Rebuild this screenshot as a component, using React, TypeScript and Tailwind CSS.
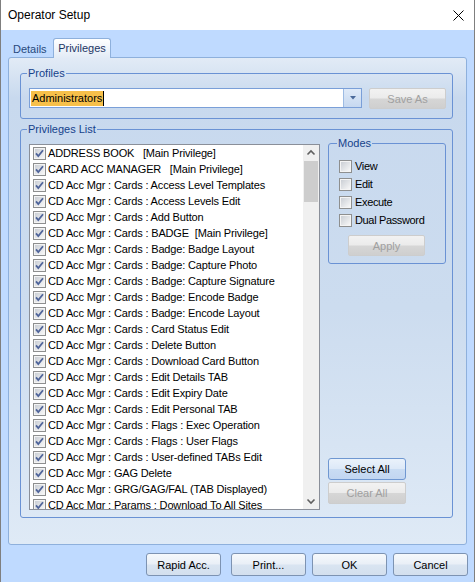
import React from 'react'

const rows = [
  'ADDRESS BOOK   [Main Privilege]',
  'CARD ACC MANAGER   [Main Privilege]',
  'CD Acc Mgr : Cards : Access Level Templates',
  'CD Acc Mgr : Cards : Access Levels Edit',
  'CD Acc Mgr : Cards : Add Button',
  'CD Acc Mgr : Cards : BADGE  [Main Privilege]',
  'CD Acc Mgr : Cards : Badge: Badge Layout',
  'CD Acc Mgr : Cards : Badge: Capture Photo',
  'CD Acc Mgr : Cards : Badge: Capture Signature',
  'CD Acc Mgr : Cards : Badge: Encode Badge',
  'CD Acc Mgr : Cards : Badge: Encode Layout',
  'CD Acc Mgr : Cards : Card Status Edit',
  'CD Acc Mgr : Cards : Delete Button',
  'CD Acc Mgr : Cards : Download Card Button',
  'CD Acc Mgr : Cards : Edit Details TAB',
  'CD Acc Mgr : Cards : Edit Expiry Date',
  'CD Acc Mgr : Cards : Edit Personal TAB',
  'CD Acc Mgr : Cards : Flags : Exec Operation',
  'CD Acc Mgr : Cards : Flags : User Flags',
  'CD Acc Mgr : Cards : User-defined TABs Edit',
  'CD Acc Mgr : GAG Delete',
  'CD Acc Mgr : GRG/GAG/FAL (TAB Displayed)',
  'CD Acc Mgr : Params : Download To All Sites',
]

function CheckBox({ checked }: { checked?: boolean }) {
  return (
    <svg width="13" height="13" viewBox="0 0 13 13" className="shrink-0">
      <defs>
        <linearGradient id="cbg" x1="0" y1="0" x2="1" y2="1">
          <stop offset="0" stopColor="#cbcfd5" />
          <stop offset="1" stopColor="#f7f7f7" />
        </linearGradient>
      </defs>
      <rect x="0.5" y="0.5" width="12" height="12" fill="#f4f4f4" stroke="#8e8f8f" />
      <rect x="2" y="2" width="9" height="9" fill="url(#cbg)" />
      {checked && (
        <path d="M3 6.3 L5.3 9 L10 3.2" fill="none" stroke="#4f649a" strokeWidth="1.8" />
      )}
    </svg>
  )
}

function Chevron({ up }: { up?: boolean }) {
  return (
    <svg width="16" height="16" viewBox="0 0 16 16">
      <path
        d={up ? 'M4.5 9.5 L8 6 L11.5 9.5' : 'M4.5 6.5 L8 10 L11.5 6.5'}
        fill="none"
        stroke="#606060"
        strokeWidth="1.6"
      />
    </svg>
  )
}

function DisabledBtn({ label, className }: { label: string; className?: string }) {
  return (
    <div
      className={
        'flex items-center justify-center rounded-[2px] border border-[#cdcdcd] bg-[linear-gradient(to_bottom,#f2f2f2_0%,#ebebeb_48%,#d6d6d6_52%,#cfcfcf_100%)] text-[#a0a0a0] ' +
        (className ?? '')
      }
    >
      {label}
    </div>
  )
}

function Btn({ label, className }: { label: string; className?: string }) {
  return (
    <div
      className={
        'flex items-center justify-center rounded-[3px] border border-[#7d93b2] bg-[linear-gradient(to_bottom,#f6f9fc_0%,#e9eff7_48%,#d9e4f1_52%,#d3dfee_100%)] text-black ' +
        (className ?? '')
      }
    >
      {label}
    </div>
  )
}

export default function App() {
  return (
    <div className="flex h-[582px] w-[475px] flex-col border-x border-[#7f7f7f] font-['Liberation_Sans',Arial,sans-serif] text-[11px] leading-[14px]">
      <div className="flex h-[30px] shrink-0 items-center justify-between bg-white pl-[7px] pr-[10px]">
        <span className="text-[12px] text-black">Operator Setup</span>
        <svg width="11" height="11" viewBox="0 0 11 11">
          <path d="M0.5 0.5 L10.5 10.5 M10.5 0.5 L0.5 10.5" stroke="#000" strokeWidth="1" />
        </svg>
      </div>

      <div className="flex flex-1 flex-col bg-[#bfdaff] pt-[8px]">
        <div className="ml-[7px] flex h-[19px] items-end">
          <div className="h-[16px] w-[45px] pl-[5px] leading-[16px] text-[#27497c]">Details</div>
          <div className="relative z-10 -mb-px h-[20px] w-[58px] rounded-t-[3px] border-x border-t border-[#8eb0dc] bg-[linear-gradient(to_bottom,#ffffff,#e2ebf6)] pt-[2px] text-center text-[#1c3563]">
            Privileges
          </div>
        </div>

        <div className="ml-[7px] h-[488px] w-[459px] rounded-[3px] border border-[#8eb0dc] bg-[linear-gradient(to_bottom,#e2ebf6_0px,#c8d9ee_40px,#ccdcef_250px,#dfeaf6_100%)] pl-[11px] pr-[13px] pt-[8px]">
          <fieldset className="rounded-[3px] border border-[#6a92d4] pb-[9px] pl-[8px] pr-[6px] pt-[8px]">
            <legend className="-ml-[2px] px-[1px] text-[#15428b]">Profiles</legend>
            <div className="flex gap-[7px]">
              <div className="flex h-[20px] w-[333px] border border-[#7a9fd8] bg-white">
                <div className="flex flex-1 items-center pl-[1px]">
                  <span className="bg-[#f7c04a] px-[1px] leading-[15px] text-black">Administrators</span>
                  <span className="h-[15px] w-px bg-black" />
                </div>
                <div className="flex w-[18px] items-center justify-center border-l border-[#9dbbe3] bg-[linear-gradient(to_bottom,#dfeaf8,#c6d8f0)]">
                  <svg width="6" height="4" viewBox="0 0 6 4">
                    <path d="M0 0 L6 0 L3 3.5 Z" fill="#4b6a9b" />
                  </svg>
                </div>
              </div>
              <DisabledBtn label="Save As" className="h-[21px] w-[77px]" />
            </div>
          </fieldset>

          <fieldset className="mt-[3px] rounded-[3px] border border-[#6a92d4] pb-[7px] pl-[8px] pr-[6px]">
            <legend className="-ml-[2px] px-[1px] text-[#15428b]">Privileges List</legend>
            <div className="flex">
              <div className="mt-[8px] flex h-[366px] w-[291px] overflow-hidden border border-[#8a8f99] bg-white">
                <div className="flex-1 overflow-hidden">
                  {rows.map((r) => (
                    <div key={r} className="flex h-[16px] items-center gap-[2px] pl-[3px]">
                      <CheckBox checked />
                      <span className="whitespace-pre text-[11px] tracking-[-0.15px] text-black">{r}</span>
                    </div>
                  ))}
                </div>
                <div className="flex w-[16px] flex-col bg-[#f0f0f0]">
                  <div className="flex h-[16px] items-center justify-center">
                    <Chevron up />
                  </div>
                  <div className="mx-px h-[41px] bg-[#cdcdcd]" />
                  <div className="flex-1" />
                  <div className="flex h-[16px] items-center justify-center">
                    <Chevron />
                  </div>
                </div>
              </div>

              <div className="ml-[8px] flex w-[118px] flex-col justify-between">
                <fieldset className="rounded-[3px] border border-[#6a92d4] pb-[7px] pl-[10px] pt-[7px]">
                  <legend className="-ml-[2px] px-[1px] text-[#15428b]">Modes</legend>
                  {['View', 'Edit', 'Execute', 'Dual Password'].map((m) => (
                    <div key={m} className="flex h-[18px] items-center gap-[3px]">
                      <CheckBox />
                      <span className="tracking-[-0.35px] text-black">{m}</span>
                    </div>
                  ))}
                  <DisabledBtn label="Apply" className="ml-[9px] mt-[6px] h-[21px] w-[77px]" />
                </fieldset>
                <div className="mb-[6px] flex flex-col gap-[2px]">
                  <div className="flex h-[22px] w-[78px] items-center justify-center rounded-[3px] border border-[#6f97d1] bg-[linear-gradient(to_bottom,#eaf2fb_0%,#dde9f8_48%,#c9dcf3_52%,#c2d6f1_100%)] text-black">
                    Select All
                  </div>
                  <DisabledBtn label="Clear All" className="h-[22px] w-[78px]" />
                </div>
              </div>
            </div>
          </fieldset>
        </div>

        <div className="mt-[8px] flex justify-end pr-[6px]">
          <Btn label="Rapid Acc." className="h-[23px] w-[75px]" />
          <Btn label="Print..." className="ml-[10px] h-[23px] w-[75px]" />
          <Btn label="OK" className="ml-[6px] h-[23px] w-[75px]" />
          <Btn label="Cancel" className="ml-[6px] h-[23px] w-[75px]" />
        </div>
      </div>
    </div>
  )
}
